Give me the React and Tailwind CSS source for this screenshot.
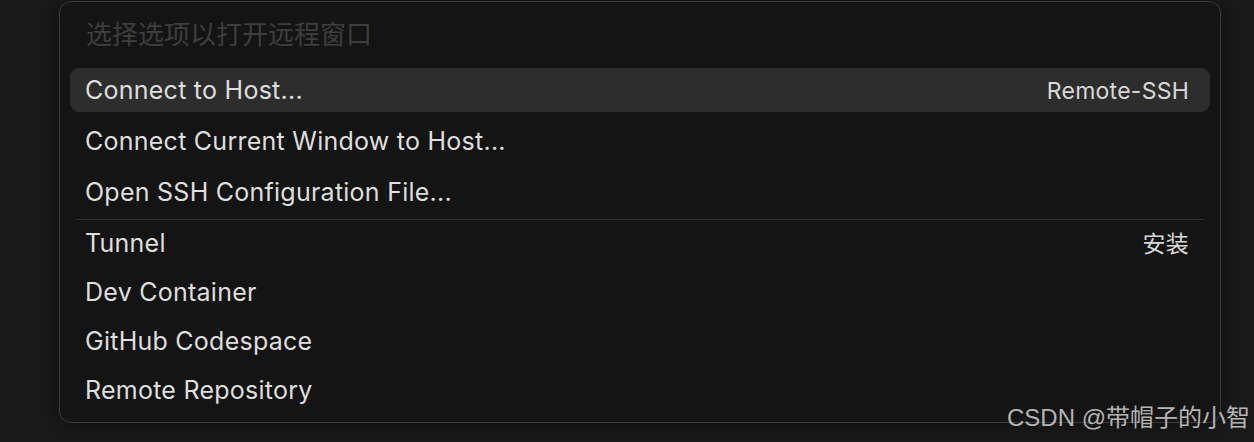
import React from 'react';

const groups = [
  [
    { label: 'Connect to Host...', hint: 'Remote-SSH', active: true },
    { label: 'Connect Current Window to Host...' },
    { label: 'Open SSH Configuration File...' },
  ],
  [
    { label: 'Tunnel', hint: '安装' },
    { label: 'Dev Container' },
    { label: 'GitHub Codespace' },
    { label: 'Remote Repository' },
  ],
];

const font = { fontFamily: 'Inter, "Noto Sans CJK SC", sans-serif' };

const Row = ({ item }) => (
  <div
    className={`flex h-[44px] items-center justify-between rounded-[9px] pl-[15px] pr-[21px] pt-[2px] tracking-[0.25px] ${
      item.active ? 'bg-[#2d2d2d]' : ''
    }`}
  >
    <span className="text-[25px] text-[#dedede]">{item.label}</span>
    {item.hint && <span className="text-[23px] text-[#d8d8d8]">{item.hint}</span>}
  </div>
);

export default function App() {
  return (
    <div className="relative h-[442px] w-full overflow-hidden bg-[#1a1a1a] pl-[59px] pt-px" style={font}>
      <div className="h-[422px] w-[1162px] rounded-[12px] border border-[#3b3b3b] bg-[#141414] px-[10px] shadow-[0_0_24px_rgba(0,0,0,0.5)]">
        <div className="flex h-[66px] items-center pl-[16px] pb-[2px]">
          <span className="text-[26px] text-[#3e3e3e]">选择选项以打开远程窗口</span>
        </div>

        <div className="flex flex-col gap-[7px]">
          {groups[0].map((item) => (
            <Row key={item.label} item={item} />
          ))}
        </div>

        <div className="mx-[6px] mt-[5px] mb-px h-px bg-[#303030]" />

        <div className="flex flex-col gap-[5px]">
          {groups[1].map((item) => (
            <Row key={item.label} item={item} />
          ))}
        </div>
      </div>

      <div
        className="absolute bottom-[12px] right-[4px] text-[24px] leading-none text-[#b4b4b4]"
        style={{ fontFamily: '"Liberation Sans", "Noto Sans CJK SC", sans-serif' }}
      >
        CSDN @带帽子的小智
      </div>
    </div>
  );
}
